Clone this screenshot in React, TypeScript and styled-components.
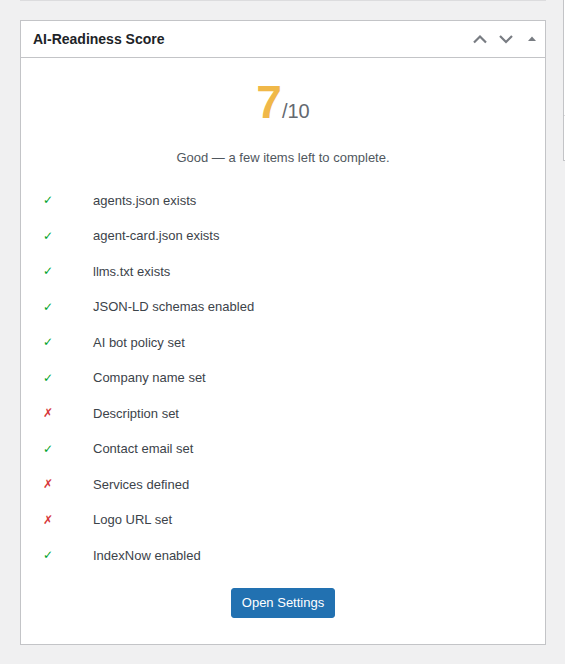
import React from "react";
import styled, { createGlobalStyle } from "styled-components";

const GlobalStyle = createGlobalStyle`
  body {
    margin: 0;
    background: #f0f0f1;
    font-family: "Liberation Sans", Arial, sans-serif;
    color: #3c434a;
  }
`;

const Page = styled.div`
  display: flex;
  align-items: flex-start;
  padding-left: 20px;
  height: 664px;
  overflow: hidden;
`;

const Column = styled.div`
  width: 526px;
  flex-shrink: 0;
`;

const PrevEdge = styled.div`
  height: 1px;
  background: #dcdcde;
`;

const SideStub = styled.div`
  margin-left: 17px;
  flex: 1;
  height: 160px;
  background: #fff;
  border-left: 1px solid #c3c4c7;
  border-bottom: 1px solid #c3c4c7;
  display: flex;
  flex-direction: column;
  justify-content: flex-end;
`;

const StubLine = styled.div`
  height: 44px;
  border-top: 1px solid #dcdcde;
`;

const Panel = styled.div`
  margin-top: 19px;
  background: #fff;
  border: 1px solid #c3c4c7;
`;

const Header = styled.div`
  display: flex;
  align-items: center;
  height: 36px;
  border-bottom: 1px solid #c3c4c7;
  padding-left: 12px;
`;

const Title = styled.h2`
  flex: 1;
  margin: 0;
  font-size: 14px;
  font-weight: 700;
  color: #1d2327;
`;

const HandleButton = styled.button`
  width: 26px;
  height: 36px;
  padding: 0;
  border: none;
  background: none;
  display: flex;
  align-items: center;
  justify-content: center;
  color: #787c82;
`;

const Body = styled.div`
  padding: 0 12px 26px;
`;

const Score = styled.div`
  margin-top: 21px;
  text-align: center;
  line-height: 1;
`;

const ScoreValue = styled.span`
  font-size: 46px;
  font-weight: 700;
  color: #f0b849;
`;

const ScoreMax = styled.span`
  font-size: 20px;
  color: #646970;
`;

const Message = styled.p`
  margin: 23px 0 15px;
  text-align: center;
  font-size: 13px;
  line-height: 19.5px;
  color: #50575e;
`;

const Checklist = styled.ul`
  margin: 0;
  padding: 0;
  list-style: none;
`;

const Row = styled.li`
  display: grid;
  grid-template-columns: 60px 1fr;
  align-items: center;
  height: 35.5px;
  font-size: 13px;
  color: #3c434a;
`;

const Mark = styled.span<{ $ok: boolean }>`
  padding-left: 10px;
  font-family: "DejaVu Sans", sans-serif;
  font-size: 12px;
  line-height: 1;
  color: ${({ $ok }) => ($ok ? "#00a32a" : "#d63638")};
`;

const Actions = styled.div`
  margin-top: 15px;
  display: flex;
  justify-content: center;
`;

const PrimaryButton = styled.button`
  font-family: inherit;
  font-size: 13px;
  line-height: 28px;
  min-height: 30px;
  padding: 0 10px;
  color: #fff;
  background: #2271b1;
  border: 1px solid #2271b1;
  border-radius: 3px;
  cursor: pointer;
`;

const items: { label: string; ok: boolean }[] = [
  { label: "agents.json exists", ok: true },
  { label: "agent-card.json exists", ok: true },
  { label: "llms.txt exists", ok: true },
  { label: "JSON-LD schemas enabled", ok: true },
  { label: "AI bot policy set", ok: true },
  { label: "Company name set", ok: true },
  { label: "Description set", ok: false },
  { label: "Contact email set", ok: true },
  { label: "Services defined", ok: false },
  { label: "Logo URL set", ok: false },
  { label: "IndexNow enabled", ok: true },
];

const Chevron = ({ up }: { up: boolean }) => (
  <svg width="16" height="16" viewBox="0 0 16 16">
    <path
      d={up ? "M2 11.5 L8 5.5 L14 11.5" : "M2 5 L8 11 L14 5"}
      fill="none"
      stroke="currentColor"
      strokeWidth="2.2"
    />
  </svg>
);

const Toggle = () => (
  <svg width="10" height="10" viewBox="0 0 10 10">
    <polygon points="1,7 5,2.5 9,7" fill="currentColor" />
  </svg>
);

const App: React.FC = () => (
  <>
    <GlobalStyle />
    <Page>
      <Column>
        <PrevEdge />
        <Panel>
          <Header>
            <Title>AI-Readiness Score</Title>
            <HandleButton aria-label="Move up">
              <Chevron up />
            </HandleButton>
            <HandleButton aria-label="Move down">
              <Chevron up={false} />
            </HandleButton>
            <HandleButton aria-label="Toggle panel">
              <Toggle />
            </HandleButton>
          </Header>
          <Body>
            <Score>
              <ScoreValue>7</ScoreValue>
              <ScoreMax>/10</ScoreMax>
            </Score>
            <Message>Good — a few items left to complete.</Message>
            <Checklist>
              {items.map((item) => (
                <Row key={item.label}>
                  <Mark $ok={item.ok}>{item.ok ? "✓" : "✗"}</Mark>
                  <span>{item.label}</span>
                </Row>
              ))}
            </Checklist>
            <Actions>
              <PrimaryButton>Open Settings</PrimaryButton>
            </Actions>
          </Body>
        </Panel>
      </Column>
      <SideStub>
        <StubLine />
      </SideStub>
    </Page>
  </>
);

export default App;
